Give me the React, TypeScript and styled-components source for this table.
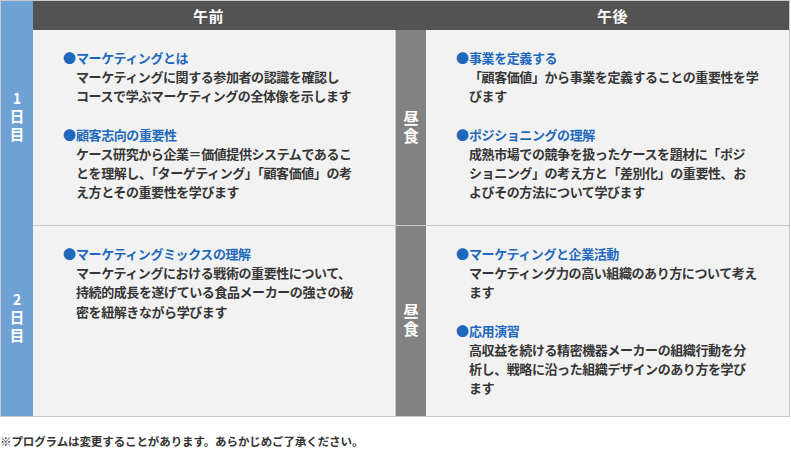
import React from "react";
import styled, { createGlobalStyle } from "styled-components";

const GlobalStyle = createGlobalStyle`
  html, body { margin: 0; padding: 0; background: #ffffff; }
  body { font-family: "Noto Sans CJK JP", "Noto Sans", sans-serif; }
`;

const Page = styled.div`
  width: 791px;
`;

const Table = styled.div`
  display: grid;
  grid-template-columns: 32px 363px 30px 363px;
  grid-template-rows: 29px 196px 190px;
  width: 788px;
  border: 1px solid #cacaca;
`;

const Corner = styled.div`
  background: #70a1d5;
`;

const HeaderBar = styled.div`
  grid-column: 2 / 5;
  display: grid;
  grid-template-columns: 363px 1fr;
  background: #535353;
`;

const HeaderLabel = styled.div<{ $shift: number }>`
  display: flex;
  align-items: center;
  justify-content: center;
  color: #ffffff;
  font-weight: 700;
  font-size: 15px;
  letter-spacing: 0.5px;
  padding-left: ${(p) => (p.$shift > 0 ? p.$shift : 0)}px;
  padding-right: ${(p) => (p.$shift < 0 ? -p.$shift : 0)}px;
`;

const DayCell = styled.div<{ $lift: number }>`
  background: #70a1d5;
  display: flex;
  flex-direction: column;
  align-items: center;
  justify-content: center;
  padding-bottom: ${(p) => p.$lift}px;
  color: #ffffff;
  font-weight: 700;
  font-size: 14.5px;
  line-height: 18px;
`;

const StackChar = styled.span`
  display: block;
  height: 18px;
  line-height: 18px;
`;

const LunchCell = styled.div<{ $last?: boolean }>`
  background: #828282;
  display: flex;
  flex-direction: column;
  align-items: center;
  justify-content: center;
  padding-bottom: 4px;
  color: #ffffff;
  font-weight: 700;
  font-size: 15.5px;
  line-height: 18px;
  border-bottom: ${(p) => (p.$last ? "none" : "1px solid #cacaca")};
`;

const LunchChar = styled.span`
  display: block;
  height: 18px;
  line-height: 18px;
`;

const ContentCell = styled.div<{ $divider?: boolean; $last?: boolean }>`
  background: #f2f2f2;
  padding: 18px 10px 0 30px;
  border-right: ${(p) => (p.$divider ? "1px solid #cacaca" : "none")};
  border-bottom: ${(p) => (p.$last ? "none" : "1px solid #cacaca")};
  font-size: 13px;
  line-height: 19.2px;
  letter-spacing: -0.42px;
  font-weight: 700;
  white-space: nowrap;
`;

const Item = styled.div`
  & + & {
    margin-top: 19.2px;
  }
`;

const Title = styled.div`
  display: flex;
  color: #1f69bd;
`;

const Bullet = styled.span`
  display: inline-block;
  width: 13px;
`;

const Desc = styled.div`
  margin-left: 13px;
  color: #363636;
`;

const Note = styled.p`
  margin: 16px 0 0 0;
  font-size: 11.5px;
  line-height: 16px;
  font-weight: 700;
  color: #333333;
  letter-spacing: -0.1px;
`;

type Entry = { title: string; lines: string[] };

const Entries: React.FC<{ items: Entry[] }> = ({ items }) => (
  <>
    {items.map((it) => (
      <Item key={it.title}>
        <Title>
          <Bullet>●</Bullet>
          <span>{it.title}</span>
        </Title>
        <Desc>
          {it.lines.map((l, i) => (
            <div key={i}>{l}</div>
          ))}
        </Desc>
      </Item>
    ))}
  </>
);

const day1am: Entry[] = [
  {
    title: "マーケティングとは",
    lines: ["マーケティングに関する参加者の認識を確認し", "コースで学ぶマーケティングの全体像を示します"],
  },
  {
    title: "顧客志向の重要性",
    lines: [
      "ケース研究から企業＝価値提供システムであるこ",
      "とを理解し、「ターゲティング」「顧客価値」の考",
      "え方とその重要性を学びます",
    ],
  },
];

const day1pm: Entry[] = [
  {
    title: "事業を定義する",
    lines: ["「顧客価値」から事業を定義することの重要性を学", "びます"],
  },
  {
    title: "ポジショニングの理解",
    lines: [
      "成熟市場での競争を扱ったケースを題材に「ポジ",
      "ショニング」の考え方と「差別化」の重要性、お",
      "よびその方法について学びます",
    ],
  },
];

const day2am: Entry[] = [
  {
    title: "マーケティングミックスの理解",
    lines: [
      "マーケティングにおける戦術の重要性について、",
      "持続的成長を遂げている食品メーカーの強さの秘",
      "密を紐解きながら学びます",
    ],
  },
];

const day2pm: Entry[] = [
  {
    title: "マーケティングと企業活動",
    lines: ["マーケティング力の高い組織のあり方について考え", "ます"],
  },
  {
    title: "応用演習",
    lines: [
      "高収益を続ける精密機器メーカーの組織行動を分",
      "析し、戦略に沿った組織デザインのあり方を学び",
      "ます",
    ],
  },
];

const DayLabel: React.FC<{ n: string; lift: number }> = ({ n, lift }) => (
  <DayCell $lift={lift}>
    <StackChar>{n}</StackChar>
    <StackChar>日</StackChar>
    <StackChar>目</StackChar>
  </DayCell>
);

const Lunch: React.FC<{ last?: boolean }> = ({ last }) => (
  <LunchCell $last={last}>
    <LunchChar>昼</LunchChar>
    <LunchChar>食</LunchChar>
  </LunchCell>
);

export default function App() {
  return (
    <Page>
      <GlobalStyle />
      <Table>
        <Corner />
        <HeaderBar>
          <HeaderLabel $shift={-12}>午前</HeaderLabel>
          <HeaderLabel $shift={40}>午後</HeaderLabel>
        </HeaderBar>

        <DayLabel n="1" lift={24} />
        <ContentCell $divider>
          <Entries items={day1am} />
        </ContentCell>
        <Lunch />
        <ContentCell>
          <Entries items={day1pm} />
        </ContentCell>

        <DayLabel n="2" lift={8} />
        <ContentCell $divider $last>
          <Entries items={day2am} />
        </ContentCell>
        <Lunch last />
        <ContentCell $last>
          <Entries items={day2pm} />
        </ContentCell>
      </Table>
      <Note>※プログラムは変更することがあります。あらかじめご了承ください。</Note>
    </Page>
  );
}
